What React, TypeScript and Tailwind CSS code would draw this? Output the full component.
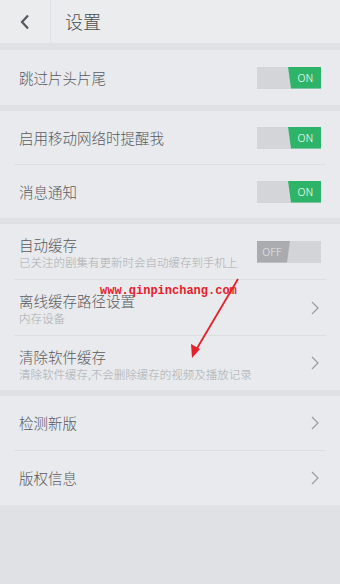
const cjk = { fontFamily: '"Noto Sans CJK SC", "Noto Sans", sans-serif' };

function Toggle({ on }: { on: boolean }) {
  if (on) {
    return (
      <div className="relative h-[22px] w-[64px] bg-[#d3d5d8]">
        <div className="absolute inset-y-0 right-0 w-[33px] bg-[#2db468] [clip-path:polygon(0_0,100%_0,100%_100%,3px_100%)]" />
        <span className="absolute inset-y-0 right-0 flex w-[31px] items-center justify-center text-[11px] font-light text-white">
          ON
        </span>
      </div>
    );
  }
  return (
    <div className="relative h-[22px] w-[64px] bg-[#d2d4d7]">
      <div className="absolute inset-y-0 left-0 w-[33px] bg-[#a9abae] [clip-path:polygon(0_0,100%_0,calc(100%-3px)_100%,0_100%)]" />
      <span className="absolute inset-y-0 left-0 flex w-[30px] items-center justify-center text-[11px] font-light text-[#e4e6e8]">
        OFF
      </span>
    </div>
  );
}

function Chevron() {
  return (
    <svg width="8" height="14" viewBox="0 0 8 14" className="mr-[2px]">
      <path d="M1 1l6 6-6 6" fill="none" stroke="#9a9ca0" strokeWidth="1.2" />
    </svg>
  );
}

function Row({
  title,
  sub,
  right,
  h = "h-[54px]",
}: {
  title: string;
  sub?: string;
  right: React.ReactNode;
  h?: string;
}) {
  return (
    <div className={`flex ${h} items-center justify-between px-[19px]`}>
      <div className={`flex flex-col ${sub ? "pt-[2px]" : ""}`}>
        <span className="text-[14.5px] font-light leading-[20px] text-[#585a5d]">{title}</span>
        {sub && (
          <span className="mt-[-1px] text-[11.5px] font-light leading-[16px] text-[#aaacaf]">{sub}</span>
        )}
      </div>
      {right}
    </div>
  );
}

const Divider = () => <div className="mx-[14px] h-px bg-[#dcdfe2]" />;

export default function App() {
  return (
    <div className="relative flex h-[584px] w-[340px] flex-col overflow-hidden bg-[#dfe1e5]" style={cjk}>
      <div className="flex h-[43px] items-center bg-[#eaecee]">
        <div className="flex h-full w-[51px] items-center justify-center border-r border-[#dfe1e4]">
          <svg width="10" height="16" viewBox="0 0 10 16">
            <path d="M8 1.5L2 8l6 6.5" fill="none" stroke="#55575a" strokeWidth="2.2" />
          </svg>
        </div>
        <span className="ml-[14px] text-[18px] font-light text-[#4a4c4f]">设置</span>
      </div>

      <div className="mt-[7px] bg-[#e8eaed]">
        <Row title="跳过片头片尾" right={<Toggle on />} h="h-[55px]" />
      </div>

      <div className="mt-[6px] bg-[#e8eaed]">
        <Row title="启用移动网络时提醒我" right={<Toggle on />} h="h-[53px]" />
        <Divider />
        <Row title="消息通知" right={<Toggle on />} h="h-[53px]" />
      </div>

      <div className="mt-[6px] bg-[#e8eaed]">
        <Row title="自动缓存" sub="已关注的剧集有更新时会自动缓存到手机上" right={<Toggle on={false} />} h="h-[55px]" />
        <Divider />
        <Row title="离线缓存路径设置" sub="内存设备" right={<Chevron />} h="h-[55px]" />
        <Divider />
        <Row title="清除软件缓存" sub="清除软件缓存,不会删除缓存的视频及播放记录" right={<Chevron />} h="h-[54px]" />
      </div>

      <div className="mt-[6px] bg-[#e8eaed]">
        <Row title="检测新版" right={<Chevron />} />
        <Divider />
        <Row title="版权信息" right={<Chevron />} />
      </div>

      <span
        className="absolute left-[100px] top-[283px] text-[12px] font-bold leading-[16px] text-[#e5202a]"
        style={{ fontFamily: '"Liberation Mono", monospace' }}
      >
        www.qinpinchang.com
      </span>
      <svg className="absolute left-0 top-0" width="340" height="584" viewBox="0 0 340 584">
        <line x1="238" y1="279" x2="196" y2="350" stroke="#e5202a" strokeWidth="1.8" />
        <path d="M192 358l-1-14 9 5z" fill="#e5202a" />
      </svg>
    </div>
  );
}
